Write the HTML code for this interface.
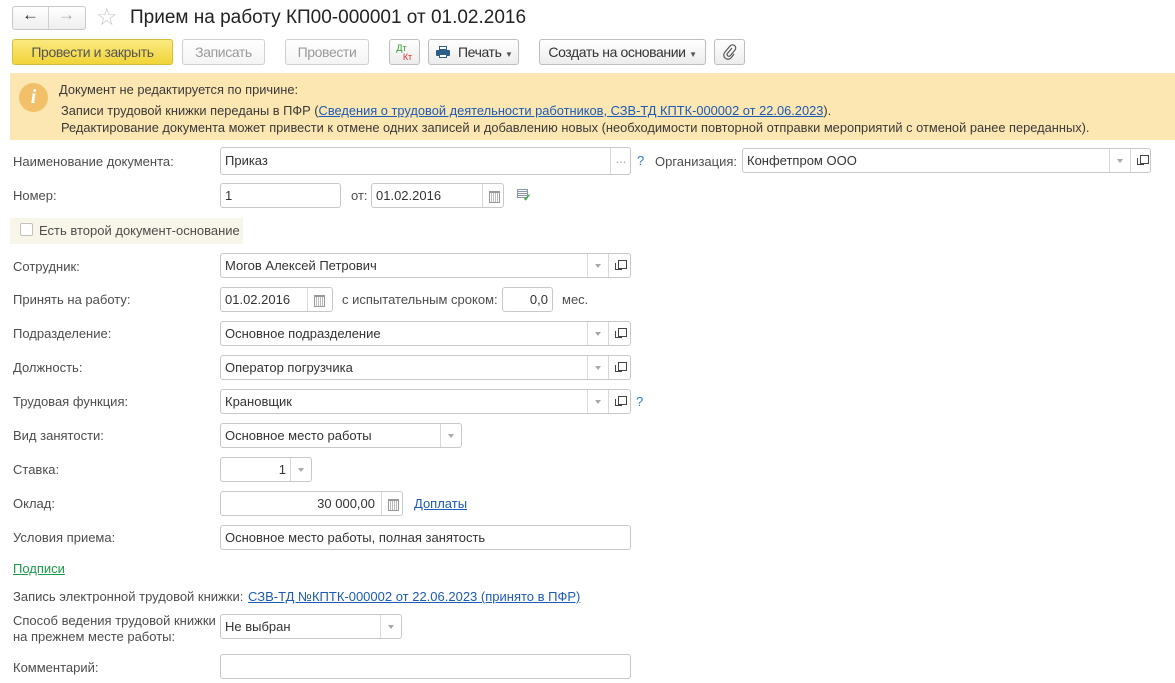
<!DOCTYPE html>
<html><head><meta charset="utf-8">
<style>
*{box-sizing:border-box;margin:0;padding:0}
body{width:1175px;height:683px;background:#fff;font-family:"Liberation Sans",Arial,sans-serif;font-size:13px;color:#404040;position:relative;overflow:hidden}
.a{position:absolute;white-space:nowrap}
.lbl{position:absolute;left:13px;color:#4d4d4d}
.inp{position:absolute;border:1px solid #c8c8c8;border-radius:3px;background:#fff;height:25px;color:#333;line-height:23px;padding-left:4px;overflow:hidden}
.btn{position:absolute;top:39px;height:26px;border:1px solid #bdbdbd;border-radius:3px;background:linear-gradient(#fff,#ececec);color:#333;line-height:24px;text-align:center;font-size:14px;letter-spacing:-0.4px;white-space:nowrap}
.dis{color:#9a9a9a;border-color:#d0d0d0;background:linear-gradient(#fff,#f4f4f4)}
.seg{position:absolute;top:0;bottom:0;border-left:1px solid #d8d8d8}
.dd::after{content:"";position:absolute;left:7px;top:10px;border:3px solid transparent;border-top:4px solid #a8a8a8}
.op::after{content:"";position:absolute;left:9px;top:6px;width:7px;height:7px;border:1px solid #444}
.op::before{content:"";position:absolute;left:6px;top:9px;width:6px;height:6px;border-left:1px solid #444;border-bottom:1px solid #444}
.cal::after{content:"";position:absolute;left:6px;top:7px;width:9px;height:9px;border:1px solid #999;border-top-width:2px;background:repeating-linear-gradient(90deg,#fff 0 1px,#bbb 1px 2px)}
.link{color:#1c5bb5;text-decoration:underline}
.q{position:absolute;color:#2a7fd0;font-size:13px}
.ban{color:#3a3a3a;font-size:12.85px}
</style></head><body>

<div class="a" style="left:12px;top:6px;width:74px;height:24px;border:1px solid #c8c8c8;border-radius:3px;background:linear-gradient(#fff,#eee)"></div>
<div class="a" style="left:48px;top:7px;width:1px;height:22px;background:#d0d0d0"></div>
<div class="a" style="left:22px;top:5px;font-size:17px;font-weight:bold;color:#333">&#8592;</div>
<div class="a" style="left:58px;top:5px;font-size:17px;font-weight:bold;color:#aaa">&#8594;</div>
<div class="a" style="left:96px;top:3px;font-size:24px;color:#c8c8c8">&#9734;</div>
<div class="a" style="left:130px;top:7px;font-size:19px;color:#222">Прием на работу КП00-000001 от 01.02.2016</div>

<div class="btn" style="left:12px;width:161px;background:linear-gradient(#fbe981,#f1d437);border-color:#d6bd3a;color:#555">Провести и закрыть</div>
<div class="btn dis" style="left:182px;width:83px">Записать</div>
<div class="btn dis" style="left:285px;width:84px">Провести</div>
<div class="btn" style="left:389px;width:31px;font-size:9px;line-height:9px;padding-top:4px;letter-spacing:0"><span style="color:#2a9a2a;position:relative;left:-3px">Дт</span><br><span style="color:#e03030;position:relative;left:3px">Кт</span></div>
<div class="btn" style="left:428px;width:91px;text-align:left;padding-left:29px">Печать <span style="font-size:8px;color:#555">&#9660;</span></div>
<div class="a" style="left:436px;top:46px;width:14px;height:12px;">
 <div class="a" style="left:3px;top:0;width:8px;height:4px;border:1px solid #2f5d8a"></div>
 <div class="a" style="left:0;top:4px;width:14px;height:6px;background:#2f5d8a;border-radius:1px"></div>
 <div class="a" style="left:3px;top:8px;width:8px;height:4px;background:#fff;border:1px solid #2f5d8a"></div>
</div>
<div class="btn" style="left:539px;width:167px">Создать на основании <span style="font-size:8px;color:#555">&#9660;</span></div>
<div class="btn" style="left:714px;width:31px"><svg width="14" height="16" viewBox="0 0 14 16" style="margin-top:4px"><path d="M9 4 L4 10 A2 2 0 0 0 7 12 L12 6 A3.2 3.2 0 0 0 7 2 L2 8 A4 4 0 0 0 8 14 L11 10" fill="none" stroke="#555" stroke-width="1.2"/></svg></div>

<div class="a" style="left:10px;top:73px;width:1165px;height:67px;background:#fce6b2"></div>
<div class="a" style="left:19px;top:83px;width:29px;height:29px;border-radius:50%;background:#f2c068;color:#fff;font:italic bold 20px 'Liberation Serif',serif;text-align:center;line-height:29px">i</div>
<div class="a ban" style="left:59px;top:82px">Документ не редактируется по причине:</div>
<div class="a ban" style="left:61px;top:103px">Записи трудовой книжки переданы в ПФР (<span class="link">Сведения о трудовой деятельности работников, СЗВ-ТД КПТК-000002 от 22.06.2023</span>).</div>
<div class="a ban" style="left:61px;top:120px">Редактирование документа может привести к отмене одних записей и добавлению новых (необходимости повторной отправки мероприятий с отменой ранее переданных).</div>

<div class="lbl" style="top:154px">Наименование документа:</div>
<div class="inp" style="left:220px;top:147px;width:411px;height:28px;line-height:26px">Приказ<div class="seg" style="left:389px;width:21px;color:#aaa;text-align:center;line-height:22px">...</div></div>
<div class="q" style="left:637px;top:153px">?</div>
<div class="a" style="left:655px;top:154px;color:#4d4d4d">Организация:</div>
<div class="inp" style="left:742px;top:148px;width:409px">Конфетпром ООО<div class="seg dd" style="left:366px;width:21px"></div><div class="seg op" style="left:387px;width:21px"></div></div>

<div class="lbl" style="top:188px">Номер:</div>
<div class="inp" style="left:220px;top:183px;width:121px">1</div>
<div class="a" style="left:351px;top:188px;color:#4d4d4d">от:</div>
<div class="inp" style="left:371px;top:183px;width:133px">01.02.2016<div class="seg cal" style="left:110px;width:22px"></div></div>
<div class="a" style="left:517px;top:189px;width:11px;height:9px;border:1px solid #8a97a8;background:repeating-linear-gradient(#fff 0 1px,#8a97a8 1px 2px)"></div>
<div class="a" style="left:523px;top:193px;color:#3aa83a;font-size:10px;font-weight:bold">&#10003;</div>

<div class="a" style="left:10px;top:218px;width:233px;height:26px;background:#f8f5e9"></div>
<div class="a" style="left:20px;top:223px;width:13px;height:13px;border:1px solid #c0c0c0;border-radius:2px;background:#fff"></div>
<div class="a" style="left:39px;top:223px;color:#4d4d4d">Есть второй документ-основание</div>

<div class="lbl" style="top:259px">Сотрудник:</div>
<div class="inp" style="left:220px;top:253px;width:411px">Могов Алексей Петрович<div class="seg dd" style="left:366px;width:21px"></div><div class="seg op" style="left:387px;width:22px"></div></div>

<div class="lbl" style="top:292px">Принять на работу:</div>
<div class="inp" style="left:220px;top:287px;width:113px">01.02.2016<div class="seg cal" style="left:86px;width:26px"></div></div>
<div class="a" style="left:342px;top:292px;color:#4d4d4d">с испытательным сроком:</div>
<div class="inp" style="left:502px;top:287px;width:51px;text-align:right;padding-right:4px">0,0</div>
<div class="a" style="left:562px;top:292px;color:#4d4d4d">мес.</div>

<div class="lbl" style="top:326px">Подразделение:</div>
<div class="inp" style="left:220px;top:321px;width:411px">Основное подразделение<div class="seg dd" style="left:366px;width:21px"></div><div class="seg op" style="left:387px;width:22px"></div></div>
<div class="lbl" style="top:360px">Должность:</div>
<div class="inp" style="left:220px;top:355px;width:411px">Оператор погрузчика<div class="seg dd" style="left:366px;width:21px"></div><div class="seg op" style="left:387px;width:22px"></div></div>
<div class="lbl" style="top:394px">Трудовая функция:</div>
<div class="inp" style="left:220px;top:389px;width:411px">Крановщик<div class="seg dd" style="left:366px;width:21px"></div><div class="seg op" style="left:387px;width:22px"></div></div>
<div class="q" style="left:636px;top:394px">?</div>

<div class="lbl" style="top:428px">Вид занятости:</div>
<div class="inp" style="left:220px;top:423px;width:242px">Основное место работы<div class="seg dd" style="left:219px;width:22px"></div></div>
<div class="lbl" style="top:462px">Ставка:</div>
<div class="inp" style="left:220px;top:457px;width:92px;padding-right:25px;text-align:right">1<div class="seg dd" style="left:69px;width:22px"></div></div>
<div class="lbl" style="top:496px">Оклад:</div>
<div class="inp" style="left:220px;top:491px;width:183px;padding-right:27px;text-align:right">30 000,00<div class="seg cal" style="left:160px;width:22px"></div></div>
<div class="a link" style="left:414px;top:496px">Доплаты</div>
<div class="lbl" style="top:530px">Условия приема:</div>
<div class="inp" style="left:220px;top:525px;width:411px">Основное место работы, полная занятость</div>

<div class="a" style="left:13px;top:561px;color:#1a9a4a;text-decoration:underline">Подписи</div>
<div class="lbl" style="top:589px">Запись электронной трудовой книжки:</div>
<div class="a link" style="left:248px;top:589px">СЗВ-ТД №КПТК-000002 от 22.06.2023 (принято в ПФР)</div>

<div class="lbl" style="top:613px;line-height:16px">Способ ведения трудовой книжки<br>на прежнем месте работы:</div>
<div class="inp" style="left:220px;top:614px;width:182px">Не выбран<div class="seg dd" style="left:159px;width:22px"></div></div>
<div class="lbl" style="top:660px">Комментарий:</div>
<div class="inp" style="left:220px;top:654px;width:411px"></div>
</body></html>
